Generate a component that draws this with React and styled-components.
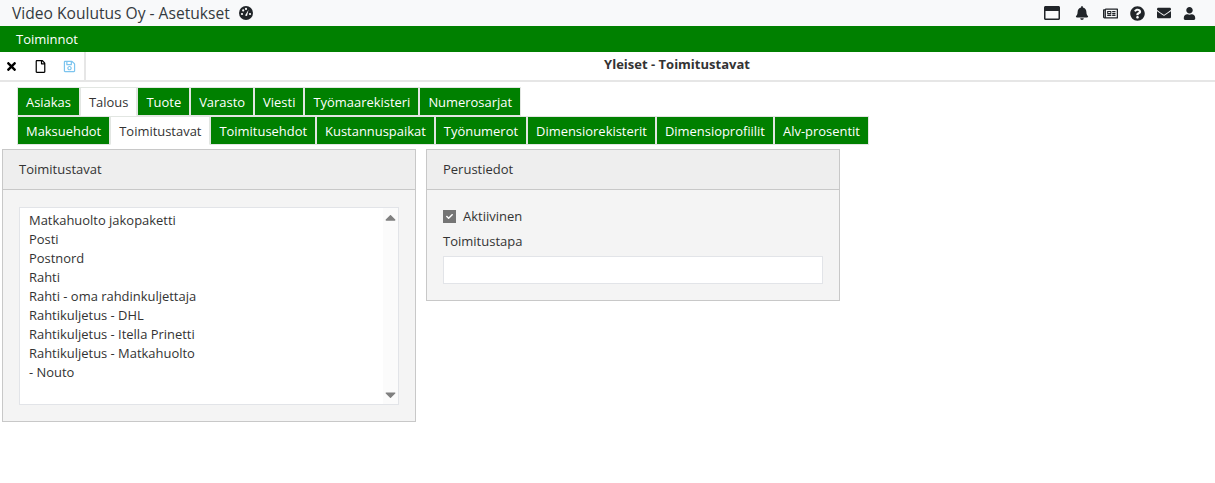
import React from 'react'
import styled, { createGlobalStyle } from 'styled-components'
import {
  FaRegWindowMaximize, FaBell, FaRegNewspaper, FaQuestionCircle,
  FaEnvelope, FaUser, FaTimes, FaRegFile, FaRegSave, FaCheck, FaCaretUp, FaCaretDown,
} from 'react-icons/fa'

const GlobalStyle = createGlobalStyle`
  html, body { margin: 0; padding: 0; background: #fff; }
  body { font-family: "Open Sans", "Liberation Sans", sans-serif; font-size: 13px; color: #333; }
  * { box-sizing: border-box; }
`

const TopBar = styled.div`
  height: 26px;
  background: #f8f9fa;
  display: flex;
  align-items: center;
  justify-content: space-between;
  padding: 0 19px 0 12px;
`
const Title = styled.div`
  font-size: 15.6px;
  color: #343a40;
  display: flex;
  align-items: center;
  gap: 9px;
`
const Gauge = styled.svg`
  width: 14px;
  height: 14px;
  display: block;
`
const TopIcons = styled.div`
  display: flex;
  align-items: center;
  color: #212529;
  svg { display: block; }
`
const TopIcon = styled.span`
  display: block;
  margin-left: ${({ $gap }) => $gap}px;
`
const GreenBar = styled.div`
  height: 26px;
  background: #008000;
  color: #fff;
  display: flex;
  align-items: center;
  padding-left: 16px;
  font-size: 13px;
`
const ToolBar = styled.div`
  height: 30px;
  display: flex;
  border-bottom: 2px solid #e6e6e6;
`
const ToolIcons = styled.div`
  width: 86px;
  border-right: 2px solid #e6e6e6;
  display: flex;
  align-items: center;
  padding: 0 0 0 5px;
  gap: 16px;
  font-size: 13px;
  color: #000;
  svg { margin-top: 1px; }
`
const SaveIcon = styled(FaRegSave)`
  color: #7cc4ee;
`
const PageTitle = styled.div`
  flex: 1;
  text-align: center;
  font-size: 13px;
  font-weight: 700;
  line-height: 25px;
  color: #333;
  padding-left: 53px;
`
const TabRows = styled.div`
  padding: 5px 0 0 17px;
`
const TabRow = styled.div`
  display: flex;
  height: 29px;
`
const Tab = styled.div`
  height: 29px;
  padding: 0 8px;
  display: flex;
  align-items: center;
  border: 1px solid #e2e6e2;
  font-size: 12.95px;
  background: ${({ $active }) => ($active ? '#fff' : '#008000')};
  color: ${({ $active }) => ($active ? '#333' : '#fff')};
  ${({ $active }) => $active && 'border-bottom-color: #fff;'}
`
const Panels = styled.div`
  display: flex;
  align-items: flex-start;
  gap: 10px;
  padding: 4px 0 0 2px;
`
const Panel = styled.div`
  width: 414px;
  background: #f4f4f4;
  border: 1px solid #c8c8c8;
`
const PanelHeader = styled.div`
  height: 40px;
  background: #eeeeee;
  border-bottom: 1px solid #c8c8c8;
  padding: 0 0 2px 16px;
  display: flex;
  align-items: center;
  font-size: 13px;
`
const PanelBody = styled.div`
  padding: ${({ $form }) => ($form ? '16px' : '17px 16px 16px')};
`
const ListBox = styled.div`
  height: 198px;
  background: #fff;
  border: 1px solid #e2e4e8;
  display: flex;
`
const Options = styled.div`
  flex: 1;
  padding: 3px 9px;
`
const Option = styled.div`
  height: 19px;
  line-height: 19px;
  font-size: 12.95px;
`
const Scrollbar = styled.div`
  width: 15px;
  background: #fbfbfb;
  color: #808080;
  display: flex;
  flex-direction: column;
  justify-content: space-between;
  align-items: center;
  font-size: 17px;
  padding: 1px 0;
  svg { display: block; }
`
const CheckRow = styled.label`
  display: flex;
  align-items: center;
  gap: 7px;
  height: 20px;
  font-size: 13px;
`
const CheckBox = styled.span`
  width: 13px;
  height: 13px;
  background: #757575;
  color: #fff;
  font-size: 7px;
  display: flex;
  align-items: center;
  justify-content: center;
`
const FieldLabel = styled.div`
  margin-top: 5px;
  height: 20px;
  line-height: 20px;
  font-size: 13px;
`
const TextInput = styled.div`
  margin-top: 5px;
  height: 28px;
  background: #fff;
  border: 1px solid #e2e4e8;
`

const row1 = ['Asiakas', 'Talous', 'Tuote', 'Varasto', 'Viesti', 'Työmaarekisteri', 'Numerosarjat']
const row2 = ['Maksuehdot', 'Toimitustavat', 'Toimitusehdot', 'Kustannuspaikat', 'Työnumerot', 'Dimensiorekisterit', 'Dimensioprofiilit', 'Alv-prosentit']
const items = [
  'Matkahuolto jakopaketti', 'Posti', 'Postnord', 'Rahti', 'Rahti - oma rahdinkuljettaja',
  'Rahtikuljetus - DHL', 'Rahtikuljetus - Itella Prinetti', 'Rahtikuljetus - Matkahuolto', '- Nouto',
]

export default function App() {
  return (
    <>
      <GlobalStyle />
      <TopBar>
        <Title>
          Video Koulutus Oy - Asetukset
          <Gauge viewBox="0 0 14 14">
            <circle cx="7" cy="7" r="7" fill="#212529" />
            <circle cx="3" cy="8" r="1.1" fill="#fff" />
            <circle cx="4.2" cy="4.4" r="1.1" fill="#fff" />
            <circle cx="7" cy="2.9" r="1.1" fill="#fff" />
            <circle cx="11" cy="8" r="1.1" fill="#fff" />
            <path d="M6 9.5 L9.6 3.8 L8 10 Z" fill="#fff" />
          </Gauge>
        </Title>
        <TopIcons>
          <TopIcon $gap={0}><FaRegWindowMaximize size={16} /></TopIcon>
          <TopIcon $gap={15}><FaBell size={14} /></TopIcon>
          <TopIcon $gap={14}><FaRegNewspaper size={15} /></TopIcon>
          <TopIcon $gap={12}><FaQuestionCircle size={15} /></TopIcon>
          <TopIcon $gap={12}><FaEnvelope size={14} /></TopIcon>
          <TopIcon $gap={12}><FaUser size={13} /></TopIcon>
        </TopIcons>
      </TopBar>
      <GreenBar>Toiminnot</GreenBar>
      <ToolBar>
        <ToolIcons>
          <FaTimes />
          <FaRegFile />
          <SaveIcon />
        </ToolIcons>
        <PageTitle>Yleiset - Toimitustavat</PageTitle>
      </ToolBar>
      <TabRows>
        <TabRow>
          {row1.map(t => <Tab key={t} $active={t === 'Talous'}>{t}</Tab>)}
        </TabRow>
        <TabRow>
          {row2.map(t => <Tab key={t} $active={t === 'Toimitustavat'}>{t}</Tab>)}
        </TabRow>
      </TabRows>
      <Panels>
        <Panel>
          <PanelHeader>Toimitustavat</PanelHeader>
          <PanelBody>
            <ListBox>
              <Options>
                {items.map(i => <Option key={i}>{i}</Option>)}
              </Options>
              <Scrollbar><FaCaretUp /><FaCaretDown /></Scrollbar>
            </ListBox>
          </PanelBody>
        </Panel>
        <Panel>
          <PanelHeader>Perustiedot</PanelHeader>
          <PanelBody $form>
            <CheckRow><CheckBox><FaCheck /></CheckBox>Aktiivinen</CheckRow>
            <FieldLabel>Toimitustapa</FieldLabel>
            <TextInput />
          </PanelBody>
        </Panel>
      </Panels>
    </>
  )
}
